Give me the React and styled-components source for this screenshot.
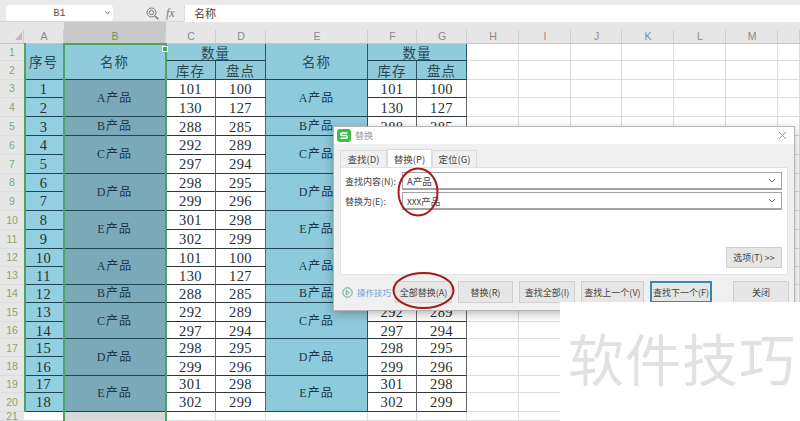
import React from "react";
import styled, { createGlobalStyle } from "styled-components";

const SANS = `"Noto Sans CJK SC", "Liberation Sans", sans-serif`;
const SERIF = `"Liberation Serif", "Noto Sans CJK SC", serif`;

// measured heights of rows 1..20, the sheet was not quite evenly spaced
const ROW_HEIGHTS = [17, 18.5, 18.5, 19, 19, 18.7, 19.3, 18, 19, 19, 19, 18, 18, 18, 18.7, 17.8, 18, 18.5, 17, 19];

const GlobalStyle = createGlobalStyle`
  html, body {
    margin: 0;
    width: 800px;
    height: 421px;
    overflow: hidden;
    background: #fff;
  }
`;

const Page = styled.div`
  position: relative;
  width: 800px;
  height: 421px;
  overflow: hidden;
  font-family: ${SANS};
`;

const FormulaBar = styled.div`
  height: 22px;
  box-sizing: border-box;
  padding: 5px 0 0 6px;
  display: flex;
  background: #ebebeb;
  border-bottom: 1px solid #d6d6d6;
`;

const NameBox = styled.div`
  width: 107px;
  height: 16px;
  background: #fff;
  border-radius: 4px;
  display: flex;
  align-items: center;
  justify-content: center;
  position: relative;
  font: 10px "Liberation Mono", monospace;
  color: #555;

  svg {
    position: absolute;
    right: 3px;
    top: 6px;
  }
`;

const FormulaTools = styled.div`
  width: 71px;
  display: flex;
  align-items: center;
  padding-left: 33px;
  box-sizing: border-box;
  gap: 7px;
  color: #777;
`;

const Fx = styled.span`
  font: italic 12px "Liberation Serif", serif;
  color: #777;
`;

const FormulaInput = styled.div`
  flex: 1;
  height: 17px;
  background: #fff;
  border-left: 1px solid #ddd;
  padding-left: 9px;
  font-size: 11px;
  line-height: 17px;
  color: #444;
`;

const Sheet = styled.div`
  position: relative;
  display: grid;
  grid-template-columns: 24px 40px 102px 50px 50px 102px 49px 50px 52px 52px 51px 52px 52px 52px 22px;
  grid-template-rows: 22px ${ROW_HEIGHTS.map((h) => `${h}px`).join(" ")} 9px;
`;

const ColHead = styled.div`
  background: ${(p) => (p.$active ? "#c9c9c9" : "#e6e6e6")};
  color: ${(p) => (p.$active ? "#5e9a63" : "#8a8a8a")};
  border-bottom: 1px solid #c4c4c4;
  box-sizing: border-box;
  position: relative;
  display: flex;
  align-items: flex-end;
  justify-content: center;
  font: 10.5px/14px "Liberation Sans", sans-serif;

  &::after {
    content: "";
    position: absolute;
    right: 0;
    top: 8px;
    bottom: 0;
    width: 1px;
    background: #cfcfcf;
  }
`;

const Corner = styled.svg`
  position: absolute;
  left: 15px;
  top: 10px;
`;

const RowHead = styled.div`
  background: #e6e6e6;
  color: #86a96f;
  border-bottom: 1px solid #dcdcdc;
  box-sizing: border-box;
  display: flex;
  align-items: center;
  justify-content: center;
  font: 10.5px "Liberation Sans", sans-serif;
`;

const CELL_BG = {
  head: "#90cbdc",
  index: "#92cfe0",
  selected: "#7aa9ba",
  name: "#8dcadb",
  num: "#fff",
};

const Cell = styled.div`
  grid-row: span ${(p) => p.$rows || 1};
  grid-column: span ${(p) => p.$cols || 1};
  box-sizing: border-box;
  padding-top: ${(p) => (p.$big ? 0 : 2)}px;
  display: flex;
  align-items: center;
  justify-content: center;
  background: ${(p) => CELL_BG[p.$kind]};
  border-right: ${(p) => (p.$kind === "num" ? "1.5px solid #666" : "1px solid #2b5566")};
  border-bottom: 1px solid ${(p) => (p.$kind === "num" ? "#30383c" : "#1f4454")};
  color: ${(p) => (p.$big ? "#2c474f" : "#2a2f31")};
  font-family: ${SERIF};
  font-size: ${(p) => (p.$big ? "13.5px" : "14.5px")};
  letter-spacing: ${(p) => (p.$big ? "1px" : "0.4px")};
  overflow: hidden;
  white-space: nowrap;
`;

const ProductName = styled.span`
  font-size: 12px;
  letter-spacing: 1px;
  margin-top: -4px;
  color: #1f3640;
`;

const Blank = styled.div`
  border-right: 1px solid #dcdcdc;
  border-bottom: 1px solid #dcdcdc;
  background: ${(p) => (p.$active ? "#d8d8d8" : "#fff")};
  box-sizing: border-box;
`;

const SelectionColumn = styled.div`
  position: absolute;
  inset: -1px -1px 0 -1px;
  grid-column: 3 / 4;
  grid-row: 2 / span 20;
  border: 2px solid #4ea45f;
  border-bottom: 0;
  pointer-events: none;
`;

const SelectionBottom = styled.div`
  position: absolute;
  inset: 0 -1px 0 -1px;
  grid-column: 3 / 4;
  grid-row: 22 / 23;
  border-left: 2px solid #4ea45f;
  border-right: 2px solid #4ea45f;
`;

const Handle = styled.div`
  position: absolute;
  right: -3px;
  top: 1px;
  width: 4px;
  height: 4px;
  background: #4ea45f;
  border: 1px solid #fff;
`;

const LeftEdge = styled.div`
  position: absolute;
  inset: -1px auto 0 0;
  width: 2px;
  grid-column: 2 / 3;
  grid-row: 2 / span 20;
  background: #4ea45f;
`;

const Dialog = styled.div`
  position: absolute;
  left: 333px;
  top: 126px;
  width: 462px;
  height: 185px;
  box-sizing: border-box;
  background: #f0f0f0;
  border: 1px solid #b5b5b5;
  box-shadow: 0 3px 9px rgba(0, 0, 0, 0.28);
  display: flex;
  flex-direction: column;
  color: #444;
`;

const TitleBar = styled.div`
  height: 17px;
  background: #fff;
  display: flex;
  align-items: center;
  padding: 0 7px 0 3px;
  gap: 4px;
  font-size: 9px;
  color: #999;
`;

const Title = styled.span`
  flex: 1;
`;

const Tabs = styled.div`
  display: flex;
  align-items: flex-end;
  height: 23px;
  padding-left: 6px;
`;

const Tab = styled.div`
  height: ${(p) => (p.$active ? "18px" : "17px")};
  width: ${(p) => p.$width}px;
  box-sizing: border-box;
  display: flex;
  align-items: center;
  justify-content: center;
  font-size: 9.5px;
  background: ${(p) => (p.$active ? "#fff" : "#f0f0f0")};
  border: 1px solid #dcdcdc;
  border-bottom: 0;
`;

const Panel = styled.div`
  height: 108px;
  margin: 0 6px;
  background: #fff;
  border: 1px solid #e2e2e2;
  box-sizing: border-box;
  padding: 4px 5px 6px 4px;
  display: flex;
  flex-direction: column;
  gap: 2px;
`;

const FieldRow = styled.div`
  display: flex;
  align-items: center;
  height: 18px;
`;

const FieldLabel = styled.label`
  width: 57px;
  font-size: 9px;
  white-space: nowrap;
`;

const Combo = styled.div`
  flex: 1;
  height: 18px;
  box-sizing: border-box;
  border: 1px solid #a4a4a4;
  border-bottom-width: 2px;
  display: flex;
  align-items: center;
  justify-content: space-between;
  padding: 0 5px 0 4px;
  font-size: 9.5px;
  color: #444;
`;

const OptionsRow = styled.div`
  margin-top: auto;
  display: flex;
  justify-content: flex-end;
`;

const Button = styled.div`
  width: ${(p) => p.$width}px;
  height: ${(p) => p.$height || 22}px;
  margin-right: ${(p) => p.$gap || 0}px;
  box-sizing: border-box;
  flex: none;
  background: #e6e6e6;
  border: ${(p) => (p.$primary ? "2px solid #3a88ac" : "1px solid #cfcfcf")};
  display: flex;
  align-items: center;
  justify-content: center;
  font-size: 9px;
  color: #444;
  white-space: nowrap;
`;

const Footer = styled.div`
  flex: 1;
  display: flex;
  align-items: flex-start;
  padding: 6px 0 0 8px;
`;

const TipLink = styled.div`
  width: 45px;
  margin-right: 8px;
  flex: none;
  height: 22px;
  display: flex;
  align-items: center;
  gap: 4px;
  font-size: 8.5px;
  color: #6d9fd6;
  white-space: nowrap;

  svg {
    flex: none;
  }
`;

const Marks = styled.svg`
  position: absolute;
  left: 0;
  top: 0;
  pointer-events: none;
`;

const Watermark = styled.div`
  position: absolute;
  left: 560px;
  top: 302px;
  width: 240px;
  height: 119px;
  box-sizing: border-box;
  padding: 15px 0 0 8px;
  background: #fff;
  color: #e1e1e1;
  font-size: 56px;
  line-height: 80px;
  letter-spacing: 1px;
  white-space: nowrap;
`;

const COLS = ["A", "B", "C", "D", "E", "F", "G", "H", "I", "J", "K", "L", "M", ""];

const STOCK = [
  [101, 100],
  [130, 127],
  [288, 285],
  [292, 289],
  [297, 294],
  [298, 295],
  [299, 296],
  [301, 298],
  [302, 299],
];

// which product each pair of rows starts, [name, rowspan]
const PRODUCTS = { 0: ["A", 2], 2: ["B", 1], 3: ["C", 2], 5: ["D", 2], 7: ["E", 2] };

const Chevron = () => (
  <svg width="8" height="5" viewBox="0 0 8 5">
    <path d="M1 1l3 3 3-3" fill="none" stroke="#666" strokeWidth="1" />
  </svg>
);

const Blanks = ({ prefix }) =>
  Array.from({ length: 7 }, (_, i) => <Blank key={`${prefix}-${i}`} />);

const buildRows = () => {
  const cells = [];
  for (let r = 0; r < 18; r++) {
    const s = r % 9;
    const product = PRODUCTS[s];
    const [a, b] = STOCK[s];
    cells.push(<RowHead key={`h${r}`}>{r + 3}</RowHead>);
    cells.push(<Cell key={`a${r}`} $kind="index">{r + 1}</Cell>);
    if (product) {
      cells.push(
        <Cell key={`b${r}`} $kind="selected" $rows={product[1]}>
          <ProductName>{product[0]}产品</ProductName>
        </Cell>
      );
    }
    cells.push(<Cell key={`c${r}`} $kind="num">{a}</Cell>);
    cells.push(<Cell key={`d${r}`} $kind="num">{b}</Cell>);
    if (product) {
      cells.push(
        <Cell key={`e${r}`} $kind="name" $rows={product[1]}>
          <ProductName>{product[0]}产品</ProductName>
        </Cell>
      );
    }
    cells.push(<Cell key={`f${r}`} $kind="num">{a}</Cell>);
    cells.push(<Cell key={`g${r}`} $kind="num">{b}</Cell>);
    cells.push(<Blanks key={`x${r}`} prefix={`x${r}`} />);
  }
  return cells;
};

const App = () => (
  <Page>
    <GlobalStyle />
    <FormulaBar>
      <NameBox>
        B1
        <svg width="5" height="4" viewBox="0 0 5 4">
          <path d="M0.5 0.5L2.5 3l2-2.5" fill="none" stroke="#777" />
        </svg>
      </NameBox>
      <FormulaTools>
        <svg width="13" height="13" viewBox="0 0 13 13" fill="none" stroke="#777" strokeWidth="1">
          <circle cx="5.5" cy="5.5" r="4.5" />
          <circle cx="5.5" cy="5.5" r="2.2" />
          <path d="M9 9l3.3 3.3" strokeWidth="1.5" />
        </svg>
        <Fx>fx</Fx>
      </FormulaTools>
      <FormulaInput>名称</FormulaInput>
    </FormulaBar>

    <Sheet>
      <ColHead>
        <Corner width="7" height="8" viewBox="0 0 7 8">
          <path d="M7 0v8H0z" fill="#bdbdbd" />
        </Corner>
      </ColHead>
      {COLS.map((c) => (
        <ColHead key={c} $active={c === "B"}>{c}</ColHead>
      ))}

      <RowHead>1</RowHead>
      <Cell $kind="head" $rows={2} $big>序号</Cell>
      <Cell $kind="head" $rows={2} $big>名称</Cell>
      <Cell $kind="head" $cols={2} $big>数量</Cell>
      <Cell $kind="head" $rows={2} $big>名称</Cell>
      <Cell $kind="head" $cols={2} $big>数量</Cell>
      <Blanks prefix="r1" />

      <RowHead>2</RowHead>
      <Cell $kind="head" $big>库存</Cell>
      <Cell $kind="head" $big>盘点</Cell>
      <Cell $kind="head" $big>库存</Cell>
      <Cell $kind="head" $big>盘点</Cell>
      <Blanks prefix="r2" />

      {buildRows()}

      <RowHead>21</RowHead>
      <Blank />
      <Blank $active />
      {Array.from({ length: 12 }, (_, i) => (
        <Blank key={i} />
      ))}

      <LeftEdge />
      <SelectionColumn>
        <Handle />
      </SelectionColumn>
      <SelectionBottom />
    </Sheet>

    <Dialog>
      <TitleBar>
        <svg width="14" height="13" viewBox="0 0 14 13">
          <rect width="14" height="13" rx="3" fill="#3dbb4f" />
          <path d="M10.5 4H5a1.3 1.3 0 0 0 0 2.6h4a1.3 1.3 0 0 1 0 2.6H3.5" fill="none" stroke="#fff" strokeWidth="1.5" />
        </svg>
        <Title>替换</Title>
        <svg width="9" height="9" viewBox="0 0 9 9">
          <path d="M1 1l7 7M8 1L1 8" stroke="#999" strokeWidth="1" />
        </svg>
      </TitleBar>
      <Tabs>
        <Tab $width={47}>查找(D)</Tab>
        <Tab $width={45} $active>替换(P)</Tab>
        <Tab $width={45}>定位(G)</Tab>
      </Tabs>
      <Panel>
        <FieldRow>
          <FieldLabel>查找内容(N):</FieldLabel>
          <Combo>
            A产品
            <Chevron />
          </Combo>
        </FieldRow>
        <FieldRow>
          <FieldLabel>替换为(E):</FieldLabel>
          <Combo>
            xxx产品
            <Chevron />
          </Combo>
        </FieldRow>
        <OptionsRow>
          <Button $width={56} $height={21}>选项(T) &gt;&gt;</Button>
        </OptionsRow>
      </Panel>
      <Footer>
        <TipLink>
          <svg width="11" height="11" viewBox="0 0 11 11" fill="none">
            <circle cx="5.5" cy="5.5" r="4.7" stroke="#5da58b" />
            <path d="M4.2 3.2l3.2 2.3-3.2 2.3z" stroke="#5da58b" strokeWidth="0.9" />
          </svg>
          操作技巧
        </TipLink>
        <Button $width={57} $gap={6}>全部替换(A)</Button>
        <Button $width={55} $gap={6}>替换(R)</Button>
        <Button $width={56} $gap={6}>查找全部(I)</Button>
        <Button $width={63} $gap={6}>查找上一个(V)</Button>
        <Button $width={62} $gap={21} $primary>查找下一个(F)</Button>
        <Button $width={56}>关闭</Button>
      </Footer>
    </Dialog>

    <Marks width="800" height="421" viewBox="0 0 800 421" fill="none" stroke="#a5191f" strokeWidth="2">
      <ellipse cx="418" cy="192" rx="19.5" ry="23.5" />
      <ellipse cx="423.5" cy="290.5" rx="30" ry="17.5" />
    </Marks>

    <Watermark>软件技巧</Watermark>
  </Page>
);

export default App;
